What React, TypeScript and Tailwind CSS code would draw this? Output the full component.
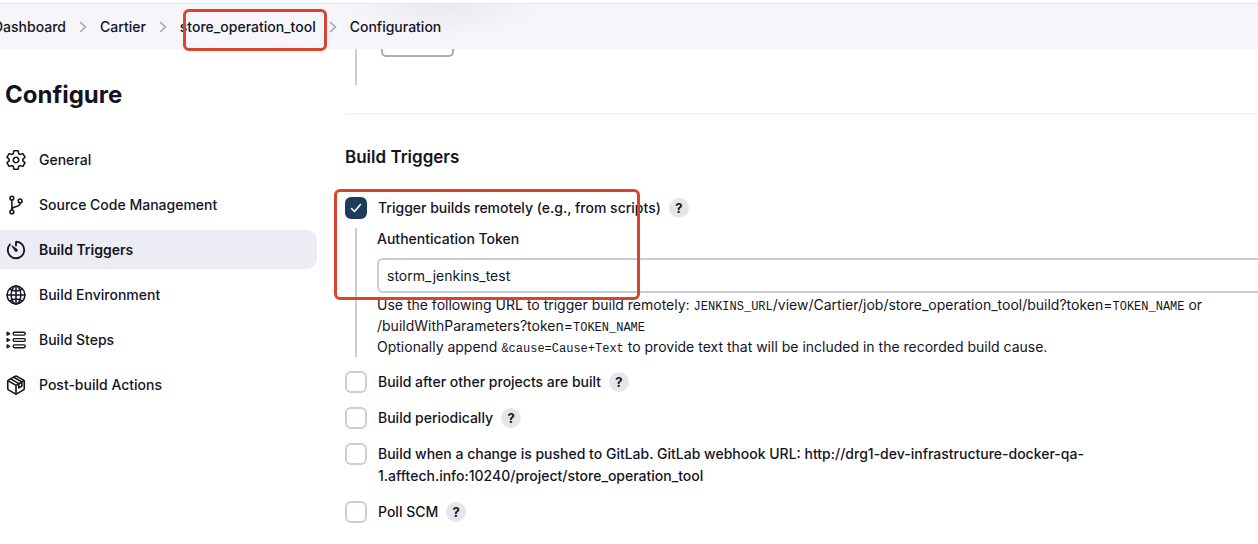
import { useState, type ReactNode } from "react";

type NavItem = {
  label: string;
  icon: ReactNode;
};

type TriggerOptionProps = {
  id: string;
  label: ReactNode;
  help?: boolean;
  defaultChecked?: boolean;
};

const iconClass = "size-[22px] shrink-0 fill-none stroke-[#14141f]";

const codeClass = "font-['Liberation_Mono',monospace] text-xs";

const breadcrumbs = ["Dashboard", "Cartier", "store_operation_tool", "Configuration"];

const navItems: NavItem[] = [
  {
    label: "General",
    icon: (
      <svg viewBox="0 0 512 512" className={iconClass} strokeWidth="36" strokeLinecap="round" strokeLinejoin="round">
        <path d="M262.29 192.31a64 64 0 1057.4 57.4 64.13 64.13 0 00-57.4-57.4zM416.39 256a154.34 154.34 0 01-1.53 20.79l45.21 35.46a10.81 10.81 0 012.45 13.75l-42.77 74a10.81 10.81 0 01-13.14 4.59l-44.9-18.08a16.11 16.11 0 00-15.17 1.75A164.48 164.48 0 01325 400.8a15.94 15.94 0 00-8.82 12.14l-6.73 47.89a11.08 11.08 0 01-10.68 9.17h-85.54a11.11 11.11 0 01-10.69-8.87l-6.72-47.82a16.07 16.07 0 00-9-12.22 155.3 155.3 0 01-21.46-12.57 16 16 0 00-15.11-1.71l-44.89 18.07a10.81 10.81 0 01-13.14-4.58l-42.77-74a10.8 10.8 0 012.45-13.75l38.21-30a16.05 16.05 0 006-14.08c-.36-4.17-.58-8.33-.58-12.5s.21-8.27.58-12.35a16 16 0 00-6.07-13.94l-38.19-30A10.81 10.81 0 0149.48 186l42.77-74a10.81 10.81 0 0113.14-4.59l44.9 18.08a16.11 16.11 0 0015.17-1.75A164.48 164.48 0 01187 111.2a15.94 15.94 0 008.82-12.14l6.73-47.89A11.08 11.08 0 01213.23 42h85.54a11.11 11.11 0 0110.69 8.87l6.72 47.82a16.07 16.07 0 009 12.22 155.3 155.3 0 0121.46 12.57 16 16 0 0015.11 1.71l44.89-18.07a10.81 10.81 0 0113.14 4.58l42.77 74a10.8 10.8 0 01-2.45 13.75l-38.21 30a16.05 16.05 0 00-6.05 14.08c.33 4.14.55 8.3.55 12.47z" />
      </svg>
    ),
  },
  {
    label: "Source Code Management",
    icon: (
      <svg viewBox="0 0 512 512" className={iconClass} strokeWidth="36" strokeLinecap="round" strokeLinejoin="round">
        <circle cx="160" cy="96" r="44" />
        <circle cx="160" cy="416" r="44" />
        <circle cx="352" cy="160" r="44" />
        <path d="M160 368V144M352 208c0 128-192 48-192 160" />
      </svg>
    ),
  },
  {
    label: "Build Triggers",
    icon: (
      <svg viewBox="0 0 512 512" className={iconClass} strokeWidth="42" strokeLinecap="round" strokeLinejoin="round">
        <path d="M112.91 128A191.85 191.85 0 0064 254c-1.18 106.35 85.65 193.8 192 194 106.2.2 192-85.83 192-192 0-104.54-83.55-189.61-187.5-192a4.36 4.36 0 00-4.5 4.37V152" />
        <path
          d="M233.38 278.63l-79-113a8.13 8.13 0 0111.32-11.32l113 79a32.5 32.5 0 01-37.25 53.26 33.21 33.21 0 01-8.07-7.94z"
          className="fill-[#14141f]"
          strokeWidth="10"
        />
      </svg>
    ),
  },
  {
    label: "Build Environment",
    icon: (
      <svg viewBox="0 0 512 512" className={iconClass} strokeWidth="36" strokeLinecap="round">
        <path d="M256 48C141.13 48 48 141.13 48 256s93.13 208 208 208 208-93.13 208-208S370.87 48 256 48z" />
        <path d="M256 48c-58.07 0-112.67 93.13-112.67 208S197.93 464 256 464s112.67-93.13 112.67-208S314.07 48 256 48z" />
        <path d="M117.33 117.33c38.24 27.15 86.38 43.34 138.67 43.34s100.43-16.19 138.67-43.34M394.67 394.67c-38.24-27.15-86.38-43.34-138.67-43.34s-100.43 16.19-138.67 43.34M256 48v416M464 256H48" />
      </svg>
    ),
  },
  {
    label: "Build Steps",
    icon: (
      <svg viewBox="0 0 512 512" className={iconClass} strokeWidth="32" strokeLinejoin="round">
        <rect x="190" y="76" width="282" height="66" rx="33" />
        <rect x="190" y="223" width="282" height="66" rx="33" />
        <rect x="190" y="370" width="282" height="66" rx="33" />
        <path d="M50 77l58 32-58 32zM50 224l58 32-58 32zM50 371l58 32-58 32z" />
      </svg>
    ),
  },
  {
    label: "Post-build Actions",
    icon: (
      <svg viewBox="0 0 512 512" className={iconClass} strokeWidth="38" strokeLinecap="round" strokeLinejoin="round">
        <path d="M448 341.37V170.61A32 32 0 00432.11 143l-152-88.46a47.94 47.94 0 00-48.24 0L79.89 143A32 32 0 0064 170.61v170.76A32 32 0 0079.89 369l152 88.46a48 48 0 0048.24 0l152-88.46A32 32 0 00448 341.37z" />
        <path d="M69 153.99l187 110 187-110M256 463.99v-200M134 114l188 110v100l70-42V184L204 74" />
      </svg>
    ),
  },
];

function Chevron() {
  return (
    <svg viewBox="0 0 8 12" className="h-3 w-2 fill-none stroke-[#a3a3af]" strokeWidth="1.5">
      <path d="M1 1l5.500 5L1 11" />
    </svg>
  );
}

function HelpButton() {
  return (
    <button
      type="button"
      aria-label="Help"
      className="mt-px flex size-5 shrink-0 items-center justify-center rounded-full bg-[#e6e6ea] text-[13px] font-bold"
    >
      ?
    </button>
  );
}

function TriggerOption({ id, label, help = false, defaultChecked = false }: TriggerOptionProps) {
  return (
    <div className="flex items-start gap-[11px]">
      <div className="relative size-[22px] shrink-0">
        <input
          id={id}
          type="checkbox"
          defaultChecked={defaultChecked}
          className="peer block size-[22px] appearance-none rounded-md border-2 border-[#cbcdd6] bg-white checked:border-[#1f3b5c] checked:bg-[#1f3b5c]"
        />
        <svg
          viewBox="0 0 22 22"
          className="pointer-events-none absolute inset-0 hidden fill-none stroke-white peer-checked:block"
          strokeWidth="1.6"
          strokeLinecap="round"
          strokeLinejoin="round"
        >
          <path d="M6.500 11.500l3 3 6-7" />
        </svg>
      </div>
      <div className="flex items-start gap-2">
        <label htmlFor={id} className="font-medium">
          {label}
        </label>
        {help ? <HelpButton /> : null}
      </div>
    </div>
  );
}

export default function App() {
  const [token, setToken] = useState("storm_jenkins_test");

  return (
    <div className="min-h-screen overflow-x-hidden bg-white font-['Inter',sans-serif] text-sm leading-[22px] text-[#14141f]">
      <header className="mt-[3px] h-[46px] border-t border-[#e2e2e8] bg-[#f5f5fa] bg-[radial-gradient(ellipse_100px_34px_at_445px_0px,#e9e9ee,transparent)]">
        <nav aria-label="Breadcrumb" className="-ml-[7px] h-full">
          <ol className="flex h-full items-center font-medium">
            {breadcrumbs.map((crumb, index) => (
              <li key={crumb} className="relative flex items-center">
                {index > 0 ? (
                  <span className="flex w-[34px] justify-center">
                    <Chevron />
                  </span>
                ) : null}
                <a href="#">{crumb}</a>
                {crumb === "store_operation_tool" ? (
                  <span className="pointer-events-none absolute -top-[7px] -right-[11px] h-[42px] w-[144px] rounded-md border-3 border-[#d9442f]" />
                ) : null}
              </li>
            ))}
          </ol>
        </nav>
      </header>

      <div className="flex">
        <aside className="w-[317px] shrink-0 pt-[30px]">
          <h1 className="pl-[5px] text-2xl leading-8 font-bold">Configure</h1>
          <nav aria-label="Sections" className="mt-[29px] flex flex-col gap-[6px]">
            {navItems.map((item) => (
              <a
                key={item.label}
                href="#"
                className={`flex h-[39px] items-center gap-3 rounded-r-[10px] pl-[5px] ${
                  item.label === "Build Triggers" ? "bg-[#ececf5] font-semibold" : "font-medium"
                }`}
              >
                {item.icon}
                {item.label}
              </a>
            ))}
          </nav>
        </aside>

        <main className="ml-7 min-w-0 grow">
          <div className="ml-[10px] flex h-9 items-start border-l-2 border-[#cbcdd6] pl-6">
            <button
              type="button"
              aria-label="Add"
              className="h-2 w-[73px] rounded-b-[5px] border-2 border-t-0 border-[#a9adb8]"
            />
          </div>

          <section className="mt-7 border-t-2 border-[#f3f3f8] pt-[31px]">
            <h2 className="text-[17px] font-semibold">Build Triggers</h2>

            <div className="relative mt-[29px]">
              <TriggerOption id="remote" label="Trigger builds remotely (e.g., from scripts)" help defaultChecked />

              <div className="mt-[9px] ml-[10px] border-l-2 border-[#cbcdd6] pl-5">
                <label htmlFor="token" className="block font-medium">
                  Authentication Token
                </label>
                <input
                  id="token"
                  type="text"
                  value={token}
                  onChange={(event) => setToken(event.target.value)}
                  className="mt-2 block h-[35px] w-full rounded-l-md border-2 border-r-0 border-[#cbcdd6] px-2"
                />
                <p className="pt-px leading-[21px]">
                  Use the following URL to trigger build remotely: <code className={codeClass}>JENKINS_URL</code>
                  /view/Cartier/job/store_operation_tool/build?token=
                  <code className={codeClass}>TOKEN_NAME</code> or
                  <br />
                  /buildWithParameters?token=
                  <code className={codeClass}>TOKEN_NAME</code>
                  <br />
                  Optionally append <code className={codeClass}>&amp;cause=Cause+Text</code> to provide text that will
                  be included in the recorded build cause.
                </p>
              </div>

              <div className="pointer-events-none absolute -top-2 -left-[11px] h-[111px] w-[306px] rounded-md border-3 border-[#d9442f]" />
            </div>

            <div className="mt-[14px] flex flex-col gap-[14px]">
              <TriggerOption id="after" label="Build after other projects are built" help />
              <TriggerOption id="periodically" label="Build periodically" help />
              <TriggerOption
                id="gitlab"
                label={
                  <>
                    Build when a change is pushed to GitLab. GitLab webhook URL: http://drg1-dev-infrastructure-docker-qa-
                    <br />
                    1.afftech.info:10240/project/store_operation_tool
                  </>
                }
              />
              <TriggerOption id="poll" label="Poll SCM" help />
            </div>
          </section>
        </main>
      </div>
    </div>
  );
}
